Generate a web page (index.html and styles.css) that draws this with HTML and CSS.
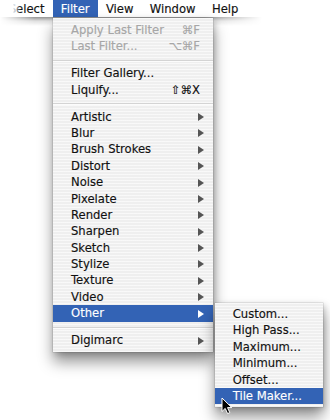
FILE: index.html
```html
<!DOCTYPE html>
<html>
<head>
<meta charset="utf-8">
<link rel="stylesheet" href="styles.css">
</head>
<body>
<div class="screen">
  <div class="menubar">
    <span class="mb-item">Select</span>
    <span class="mb-item active">Filter</span>
    <span class="mb-item">View</span>
    <span class="mb-item">Window</span>
    <span class="mb-item">Help</span>
  </div>
  <div class="fade"></div>

  <ul class="menu main">
    <li class="item disabled">Apply Last Filter<span class="shortcut">⌘F</span></li>
    <li class="item disabled">Last Filter...<span class="shortcut">⌥⌘F</span></li>
    <li class="sep"></li>
    <li class="item">Filter Gallery...</li>
    <li class="item">Liquify...<span class="shortcut">⇧⌘X</span></li>
    <li class="sep"></li>
    <li class="item has-sub">Artistic</li>
    <li class="item has-sub">Blur</li>
    <li class="item has-sub">Brush Strokes</li>
    <li class="item has-sub">Distort</li>
    <li class="item has-sub">Noise</li>
    <li class="item has-sub">Pixelate</li>
    <li class="item has-sub">Render</li>
    <li class="item has-sub">Sharpen</li>
    <li class="item has-sub">Sketch</li>
    <li class="item has-sub">Stylize</li>
    <li class="item has-sub">Texture</li>
    <li class="item has-sub">Video</li>
    <li class="item has-sub selected">Other</li>
    <li class="sep"></li>
    <li class="item has-sub">Digimarc</li>
  </ul>

  <ul class="menu sub">
    <li class="item">Custom...</li>
    <li class="item">High Pass...</li>
    <li class="item">Maximum...</li>
    <li class="item">Minimum...</li>
    <li class="item">Offset...</li>
    <li class="item selected">Tile Maker...</li>
  </ul>

  <svg class="cursor" width="12" height="18" viewBox="0 0 12 18">
    <path d="M1 1 L1 14.5 L4.2 11.4 L6.6 16.6 L8.8 15.6 L6.5 10.6 L10.8 10.6 Z" fill="#000" stroke="#fff" stroke-width="1" stroke-linejoin="round"/>
  </svg>
</div>
</body>
</html>
```
FILE: styles.css
```css
* {
  box-sizing: border-box;
  margin: 0;
  padding: 0;
}

body {
  margin: 0;
  width: 330px;
  height: 420px;
  overflow: hidden;
  background: #fff;
  font-family: "DejaVu Sans", sans-serif;
  font-size: 11.6px;
  color: #111;
  -webkit-text-stroke: 0.15px currentColor;
}

.screen {
  position: relative;
  width: 330px;
  height: 420px;
  overflow: hidden;
  background: #fff;
}

.menubar {
  position: relative;
  display: flex;
  height: 17px;
  padding-left: 0.5px;
  background: #fff;
}

.menubar::after {
  content: "";
  position: absolute;
  left: 0;
  top: 17px;
  width: 262px;
  height: 9px;
  background: linear-gradient(rgba(0, 0, 0, 0.42), rgba(0, 0, 0, 0.12) 45%, rgba(0, 0, 0, 0));
  -webkit-mask-image: linear-gradient(to right, transparent 0, #000 35px, #000 205px, transparent 262px);
  mask-image: linear-gradient(to right, transparent 0, #000 35px, #000 205px, transparent 262px);
}

.mb-item {
  padding: 1px 8.2px 0;
  line-height: 16px;
  white-space: nowrap;
}

.mb-item.active {
  background: #3363b5;
  color: #fff;
}

.fade {
  position: absolute;
  left: 0;
  top: 0;
  width: 21px;
  height: 17px;
  background: linear-gradient(to right, #fff 0, #fff 60%, rgba(255, 255, 255, 0));
}

.menu {
  position: absolute;
  list-style: none;
  background-color: #efefef;
  background-image: repeating-linear-gradient(to bottom, rgba(255, 255, 255, 0.6) 0 1px, rgba(255, 255, 255, 0) 1px 3px);
  box-shadow: 0 0 0 0.5px rgba(0, 0, 0, 0.16), 0 10px 14px rgba(0, 0, 0, 0.42), 2px 2px 6px rgba(0, 0, 0, 0.18);
}

.main {
  left: 53px;
  top: 18px;
  width: 160px;
  padding: 4px 0 3.5px;
}

.sub {
  left: 215px;
  top: 303px;
  width: 108px;
  padding: 3px 0 3px;
}

.item {
  position: relative;
  height: 16.4px;
  line-height: 16.4px;
  padding-left: 18px;
  white-space: nowrap;
}

.sub .item {
  padding-left: 17.7px;
}

.item.disabled {
  color: #a6a6a6;
}

.item.selected {
  background: #3363b5;
  color: #fff;
}

.shortcut {
  position: absolute;
  right: 13px;
  top: 0;
}

.item.has-sub::after {
  content: "";
  position: absolute;
  right: 9px;
  top: 4.4px;
  width: 0;
  height: 0;
  border-left: 6.5px solid #555;
  border-top: 4px solid transparent;
  border-bottom: 4px solid transparent;
}

.item.has-sub.selected::after {
  border-left-color: #fff;
}

.sep {
  position: relative;
  height: 10.5px;
}

.sep::before {
  content: "";
  position: absolute;
  left: 0;
  right: 0;
  top: 5px;
  height: 1px;
  background: #d4d4d4;
}

.sep::after {
  content: "";
  position: absolute;
  left: 0;
  right: 0;
  top: 6px;
  height: 1px;
  background: rgba(255, 255, 255, 0.8);
}

.cursor {
  position: absolute;
  left: 221px;
  top: 397px;
}
```
